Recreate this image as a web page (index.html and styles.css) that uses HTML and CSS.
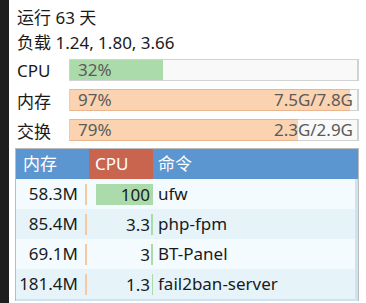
FILE: index.html
```html
<!DOCTYPE html>
<html lang="zh">
<head>
    <meta charset="UTF-8">
    <title>系统状态</title>
    <link rel="stylesheet" href="styles.css">
</head>
<body>

<div class="edge"></div>

<div class="panel">
    <div class="info-line">运行 63 天</div>
    <div class="info-line">负载 1.24, 1.80, 3.66</div>

    <div class="stat-row">
        <span class="stat-label">CPU</span>
        <div class="meter">
            <div class="meter-fill green" style="width: 32.5%"></div>
            <span class="meter-pct">32%</span>
        </div>
    </div>
    <div class="stat-row">
        <span class="stat-label">内存</span>
        <div class="meter">
            <div class="meter-fill orange" style="width: 97.5%"></div>
            <span class="meter-pct">97%</span>
            <span class="meter-size">7.5G/7.8G</span>
        </div>
    </div>
    <div class="stat-row">
        <span class="stat-label">交换</span>
        <div class="meter">
            <div class="meter-fill orange" style="width: 79.5%"></div>
            <span class="meter-pct">79%</span>
            <span class="meter-size">2.3G/2.9G</span>
        </div>
    </div>

    <div class="proc-table">
        <div class="proc-head">
            <div class="th th-mem">内存</div>
            <div class="th th-cpu">CPU</div>
            <div class="th th-cmd">命令</div>
        </div>
        <div class="proc-body">
            <div class="proc-row">
                <div class="td td-mem"><span>58.3M</span><i class="mem-bar"></i></div>
                <div class="td td-cpu"><i class="cpu-bar" style="width: 100%"></i><span>100</span></div>
                <div class="td td-cmd">ufw</div>
            </div>
            <div class="proc-row alt">
                <div class="td td-mem"><span>85.4M</span><i class="mem-bar"></i></div>
                <div class="td td-cpu"><i class="cpu-bar" style="width: 3.3%"></i><span>3.3</span></div>
                <div class="td td-cmd">php-fpm</div>
            </div>
            <div class="proc-row">
                <div class="td td-mem"><span>69.1M</span><i class="mem-bar"></i></div>
                <div class="td td-cpu"><i class="cpu-bar" style="width: 3%"></i><span>3</span></div>
                <div class="td td-cmd">BT-Panel</div>
            </div>
            <div class="proc-row alt">
                <div class="td td-mem"><span>181.4M</span><i class="mem-bar"></i></div>
                <div class="td td-cpu"><i class="cpu-bar" style="width: 1.3%"></i><span>1.3</span></div>
                <div class="td td-cmd">fail2ban-server</div>
            </div>
        </div>
    </div>
</div>

</body>
</html>
```

FILE: styles.css
```css
html, body {
    height: 100%;
}
body {
    margin: 0;
    display: flex;
    background: #fff;
    color: #1a1a1a;
    font-family: 'Noto Sans', 'Noto Sans CJK SC', sans-serif;
    font-size: 17px;
    overflow: hidden;
}
.edge {
    width: 9px;
    flex: none;
    background: #1e1e1e;
}
.panel {
    flex: 1;
    padding: 5px 7px 0 8px;
}
.info-line {
    line-height: 25px;
    height: 25px;
}
.stat-row {
    display: flex;
    align-items: center;
    height: 30px;
}
.stat-row:first-of-type {
    margin-top: 1px;
}
.stat-label {
    width: 52px;
    flex: none;
}
.meter {
    position: relative;
    flex: 1;
    height: 20px;
    background: #f9f9f9;
    border: 1px solid #d2d2d2;
    border-right-width: 2px;
    display: flex;
    align-items: center;
    justify-content: space-between;
    color: #5a5a5a;
    line-height: 20px;
}
.meter-fill {
    position: absolute;
    left: 0;
    top: 0;
    bottom: 0;
}
.meter-fill.green {
    background: #abdbab;
}
.meter-fill.orange {
    background: #fbd3b1;
    border-top: 1px solid #eab690;
    border-bottom: 1px solid #eab690;
    top: -1px;
    bottom: -1px;
}
.meter-pct, .meter-size {
    position: relative;
}
.meter-pct {
    padding-left: 8px;
}
.meter-size {
    padding-right: 4px;
}
.proc-table {
    margin: 3px 0 0 -2px;
    border: 1px solid #bcbcbc;
    border-bottom: none;
}
.proc-head, .proc-row {
    display: grid;
    grid-template-columns: 73px 64px 1fr;
    height: 30px;
    line-height: 30px;
}
.th {
    color: #fff;
    background: #5b96d0;
}
.th-mem {
    padding-left: 7px;
}
.th-cpu {
    background: #c9654f;
    padding-left: 6px;
}
.th-cmd {
    padding-left: 5px;
}
.proc-body {
    border-right: 3px solid #cde3f3;
    border-bottom: 2px solid #cde3f3;
}
.proc-row {
    background: #f3fbfe;
}
.proc-row.alt {
    background: #e6f4fa;
}
.td-mem {
    display: flex;
    justify-content: flex-end;
    align-items: center;
    padding-right: 2px;
}
.td-mem span {
    margin-right: 7px;
}
.mem-bar {
    width: 2px;
    height: 21px;
    background: #f7c9a1;
}
.td-cpu {
    position: relative;
    margin: 5px 0 4px 7px;
    line-height: 21px;
    text-align: right;
}
.cpu-bar {
    position: absolute;
    right: 0;
    top: 0;
    bottom: 0;
    min-width: 1px;
    background: #abdbab;
}
.td-cpu span {
    position: relative;
    padding-right: 3px;
}
.td-cmd {
    padding-left: 5px;
}
```
